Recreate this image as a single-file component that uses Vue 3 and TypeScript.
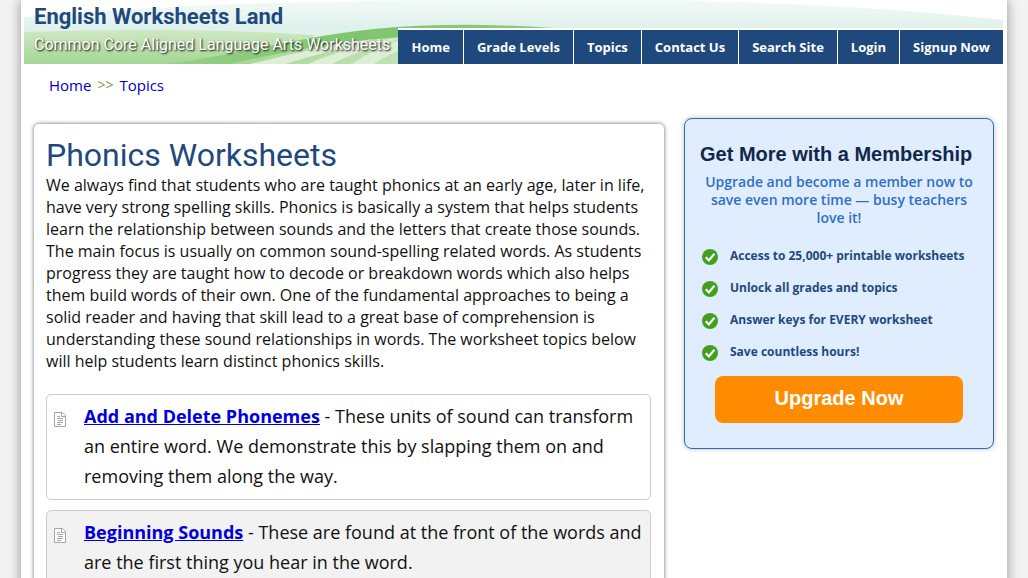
<script setup lang="ts">
interface Topic {
  title: string
  text: string
}

const navItems: string[] = ['Home', 'Grade Levels', 'Topics', 'Contact Us', 'Search Site', 'Login', 'Signup Now']

const topics: Topic[] = [
  {
    title: 'Add and Delete Phonemes',
    text: 'These units of sound can transform an entire word. We demonstrate this by slapping them on and removing them along the way.',
  },
  {
    title: 'Beginning Sounds',
    text: 'These are found at the front of the words and are the first thing you hear in the word.',
  },
]

const benefits: string[] = [
  'Access to 25,000+ printable worksheets',
  'Unlock all grades and topics',
  'Answer keys for EVERY worksheet',
  'Save countless hours!',
]
</script>

<template>
  <div class="page">
    <header class="banner">
      <svg class="waves" viewBox="0 0 979 64" preserveAspectRatio="none" aria-hidden="true">
        <defs>
          <linearGradient id="sky" x1="0" y1="0" x2="0" y2="1">
            <stop offset="0" stop-color="#f3faf8" />
            <stop offset="0.45" stop-color="#dff1ec" />
            <stop offset="1" stop-color="#e4f2ea" />
          </linearGradient>
          <linearGradient id="field" x1="0" y1="0" x2="0" y2="1">
            <stop offset="0" stop-color="#cfe8c4" />
            <stop offset="1" stop-color="#a3d792" />
          </linearGradient>
          <linearGradient id="band" x1="0" y1="0" x2="1" y2="0">
            <stop offset="0" stop-color="#93d083" />
            <stop offset="0.5" stop-color="#7fc56f" />
            <stop offset="1" stop-color="#8ccb7e" />
          </linearGradient>
          <linearGradient id="stripes" x1="0" y1="0" x2="1" y2="0">
            <stop offset="0" stop-color="#a5d694" />
            <stop offset="1" stop-color="#c6e5ba" />
          </linearGradient>
        </defs>
        <path d="M0 17C130 6 260 1 420 0H640C780 3 890 10 979 20V64H0Z" fill="url(#sky)" />
        <path d="M0 32C90 29 200 29 290 35V64H0Z" fill="url(#field)" />
        <path d="M145 64C215 54 280 36 350 29C410 23 470 24 530 28L420 36L205 64Z" fill="url(#band)" />
        <path d="M205 64C270 50 330 38 400 36V64Z" fill="url(#stripes)" />
        <path d="M226 64C270 53 312 44 350 39C320 48 285 56 262 64ZM284 64C312 52 342 42 380 37C350 46 325 55 308 64ZM328 64C345 53 360 45 380 39V49C367 54 357 58 350 64Z" fill="#dcefd4" />
      </svg>
      <div class="brand">
        <a class="brand-name" href="#">English Worksheets Land</a>
        <span class="tagline">Common Core Aligned Language Arts Worksheets</span>
      </div>
      <nav class="nav">
        <a v-for="item in navItems" :key="item" href="#">{{ item }}</a>
      </nav>
    </header>

    <nav class="crumbs" aria-label="Breadcrumb">
      <a href="#">Home</a>
      <span>&gt;&gt;</span>
      <a href="#">Topics</a>
    </nav>

    <div class="columns">
      <main class="card">
        <h1>Phonics Worksheets</h1>
        <p class="intro">
          We always find that students who are taught phonics at an early age, later in life, have very strong spelling
          skills. Phonics is basically a system that helps students learn the relationship between sounds and the
          letters that create those sounds. The main focus is usually on common sound-spelling related words. As
          students progress they are taught how to decode or breakdown words which also helps them build words of their
          own. One of the fundamental approaches to being a solid reader and having that skill lead to a great base of
          comprehension is understanding these sound relationships in words. The worksheet topics below will help
          students learn distinct phonics skills.
        </p>
        <ul class="topics">
          <li v-for="topic in topics" :key="topic.title">
            <svg class="doc" viewBox="0 0 12 15" aria-hidden="true">
              <path d="M0.5 0.5H8.5L11.5 3.5V14.5H0.5Z" fill="#fff" stroke="#a6a6a6" />
              <path d="M7.5 1V4.5H11" fill="none" stroke="#a6a6a6" />
              <path d="M3 4.5H6M3 6.5H9M4 8.5H9M3 10.5H9M3 12.5H7" stroke="#a6a6a6" />
            </svg>
            <p><a href="#">{{ topic.title }}</a> - {{ topic.text }}</p>
          </li>
        </ul>
      </main>

      <aside class="member">
        <h2>Get More with a Membership</h2>
        <p class="pitch">Upgrade and become a member now to save even more time — busy teachers love it!</p>
        <ul class="benefits">
          <li v-for="benefit in benefits" :key="benefit">
            <svg viewBox="0 0 16 16" aria-hidden="true">
              <circle cx="8" cy="8" r="8" fill="#43a01e" />
              <path d="M3.8 8.2L6.8 11.4L12.4 4.8" fill="none" stroke="#fff" stroke-width="2.2" />
            </svg>
            <span>{{ benefit }}</span>
          </li>
        </ul>
        <button class="upgrade" type="button">Upgrade Now</button>
      </aside>
    </div>
  </div>
</template>

<style>
body {
  margin: 0;
  background: #f3f3f3;
}
</style>

<style scoped>
.page {
  box-sizing: border-box;
  min-height: 100vh;
  margin: 0 21px;
  padding-bottom: 20px;
  background: #fff;
  box-shadow: 0 0 12px rgba(0, 0, 0, 0.4);
  font-family: "Open Sans", "Noto Sans", sans-serif;
  color: #111;
}
.banner {
  position: relative;
  display: flex;
  justify-content: space-between;
  align-items: flex-end;
  height: 64px;
  margin: 0 4px 0 3px;
}
.waves {
  position: absolute;
  inset: 0;
  width: 100%;
  height: 100%;
}
.brand {
  position: relative;
  display: flex;
  flex-direction: column;
  align-self: flex-start;
  padding: 3px 0 0 10px;
  font-family: Roboto, sans-serif;
  white-space: nowrap;
}
.brand-name {
  font-size: 22px;
  line-height: 28px;
  font-weight: 700;
  color: #1f497d;
  text-decoration: none;
}
.tagline {
  font-size: 16px;
  line-height: 28px;
  color: #fff;
  text-shadow: 1px 1px 2px #000;
}
.nav {
  position: relative;
  display: flex;
  border-top: 2px solid #fff;
}
.nav a {
  padding: 0 13px;
  background: #1f497d;
  color: #fff;
  font-size: 13px;
  line-height: 34px;
  font-weight: 700;
  text-decoration: none;
  white-space: nowrap;
}
.nav a + a {
  border-left: 1px solid #fff;
}
.crumbs {
  display: flex;
  gap: 6px;
  padding: 11px 28px 0;
  font-size: 15px;
  line-height: 20px;
}
.crumbs a {
  color: #0000cc;
  text-decoration: none;
}
.crumbs span {
  color: #76a046;
  font-size: 14px;
}
.columns {
  display: flex;
  align-items: flex-start;
  gap: 20px;
  padding: 23px 13px 0;
}
.card {
  box-sizing: border-box;
  flex: 1;
  min-width: 0;
  margin-top: 6px;
  padding: 12px 13px 12px 12px;
  border-radius: 5px;
  background: #fff;
  box-shadow: 0 0 4px rgba(0, 0, 0, 0.6);
}
h1 {
  margin: 0;
  font-family: Roboto, sans-serif;
  font-size: 32px;
  line-height: 38px;
  font-weight: 400;
  color: #1f497d;
}
.intro {
  margin: 0;
  font-size: 16px;
  line-height: 22px;
}
.topics {
  display: flex;
  flex-direction: column;
  gap: 10px;
  margin: 22px 0 0;
  padding: 0;
  list-style: none;
}
.topics li {
  display: flex;
  gap: 18px;
  padding: 6px 7px 8px;
  border: 1px solid #ccc;
  border-radius: 5px;
}
.topics li:nth-child(even) {
  background: #f2f2f2;
}
.doc {
  flex: none;
  width: 12px;
  height: 15px;
  margin-top: 11px;
}
.topics p {
  margin: 0;
  font-size: 18px;
  line-height: 30px;
}
.topics a {
  font-weight: 700;
  color: #0000dd;
}
.member {
  box-sizing: border-box;
  flex: none;
  width: 310px;
  padding: 20px 15px 25px;
  border: 1px solid #2f6ac0;
  border-radius: 8px;
  background: #e0edff;
  box-shadow: 0 0 5px rgba(0, 0, 0, 0.25);
}
h2 {
  margin: 0;
  font-family: "Liberation Sans", Arial, sans-serif;
  font-size: 20px;
  line-height: 30px;
  font-weight: 700;
  color: #12284b;
  white-space: nowrap;
}
.pitch {
  margin: 4px 0 0;
  font-size: 14px;
  line-height: 18px;
  font-weight: 600;
  color: #2f6fc6;
  text-align: center;
}
.benefits {
  display: flex;
  flex-direction: column;
  gap: 12px;
  margin: 19px 0 14px;
  padding: 0 0 0 2px;
  list-style: none;
}
.benefits li {
  display: flex;
  align-items: flex-end;
  gap: 12px;
  font-size: 12px;
  line-height: 20px;
  font-weight: 700;
  color: #1f497d;
}
.benefits svg {
  flex: none;
  width: 16px;
  height: 16px;
  margin-bottom: 1px;
}
.upgrade {
  display: block;
  width: 248px;
  margin: 0 auto;
  padding: 9px 10px 11px;
  border: 0;
  border-radius: 8px;
  background: #ff8c00;
  color: #fff;
  font-family: "Liberation Sans", Arial, sans-serif;
  font-size: 20px;
  line-height: 27px;
  font-weight: 700;
  cursor: pointer;
}
</style>
